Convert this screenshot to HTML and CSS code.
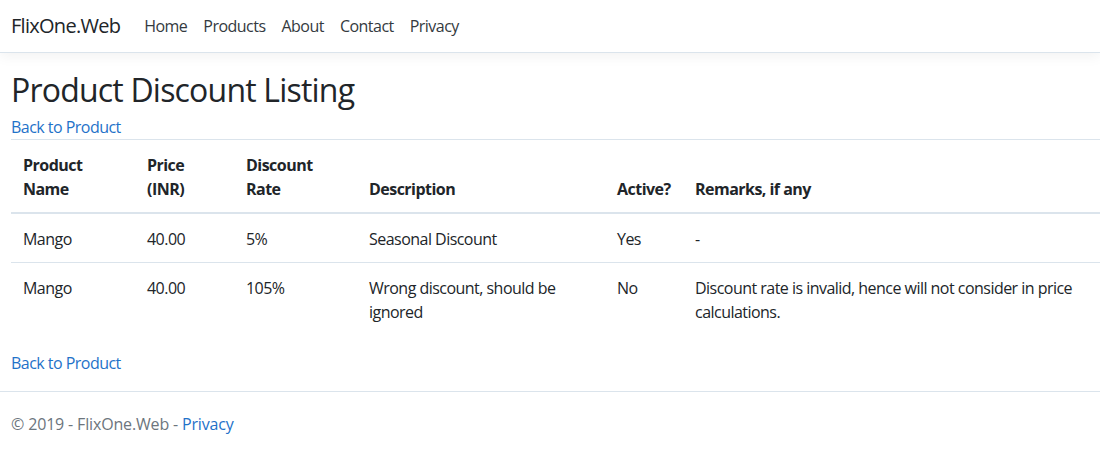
FILE: index.html
```html
<!DOCTYPE html>
<html>
<head>
<meta charset="utf-8">
<title>Product Discount Listing - FlixOne.Web</title>
<link rel="stylesheet" href="styles.css">
</head>
<body>
<header class="navbar">
  <a class="brand" href="#">FlixOne.Web</a>
  <nav class="nav">
    <a class="nav-link" href="#">Home</a>
    <a class="nav-link" href="#">Products</a>
    <a class="nav-link" href="#">About</a>
    <a class="nav-link" href="#">Contact</a>
    <a class="nav-link" href="#">Privacy</a>
  </nav>
</header>
<main class="container">
  <h1 class="title">Product Discount Listing</h1>
  <p class="para para-top"><a class="link" href="#">Back to Product</a></p>
  <table class="table">
    <colgroup>
      <col class="c1"><col class="c2"><col class="c3"><col class="c4"><col class="c5"><col class="c6">
    </colgroup>
    <thead>
      <tr>
        <th>Product Name</th>
        <th>Price (INR)</th>
        <th>Discount Rate</th>
        <th>Description</th>
        <th>Active?</th>
        <th>Remarks, if any</th>
      </tr>
    </thead>
    <tbody>
      <tr>
        <td>Mango</td>
        <td>40.00</td>
        <td>5%</td>
        <td>Seasonal Discount</td>
        <td>Yes</td>
        <td>-</td>
      </tr>
      <tr>
        <td>Mango</td>
        <td>40.00</td>
        <td>105%</td>
        <td>Wrong discount, should be ignored</td>
        <td>No</td>
        <td>Discount rate is invalid, hence will not consider in price calculations.</td>
      </tr>
    </tbody>
  </table>
  <p class="para"><a class="link" href="#">Back to Product</a></p>
</main>
<footer class="footer">
  <span>&copy; 2019 - FlixOne.Web - <a class="link" href="#">Privacy</a></span>
</footer>
</body>
</html>
```
FILE: styles.css
```css
* { box-sizing: border-box; }
html, body { margin: 0; padding: 0; }
body {
  font-family: "Segoe UI", "Open Sans", "Noto Sans", sans-serif;
  font-size: 16px;
  line-height: 1.5;
  letter-spacing: -0.033em;
  color: #212529;
  background: #fff;
}
a { text-decoration: none; }
.navbar {
  display: flex;
  align-items: center;
  height: 53px;
  padding: 0 11px;
  border-bottom: 1px solid #dbe4ec;
  box-shadow: 0 4px 12px rgba(0,0,0,0.05);
  background: #fff;
}
.brand {
  font-size: 20px;
  color: #212529;
  margin-right: 16px;
  line-height: 30px;
  letter-spacing: -0.036em;
}
.nav { display: flex; }
.nav-link {
  color: #343a40;
  padding: 0 8px;
  line-height: 24px;
}
.container { padding: 18px 0 0 11px; }
.title {
  font-size: 32px;
  font-weight: 400;
  line-height: 38px;
  margin: 0 0 6px;
  letter-spacing: -0.025em;
}
.para { margin: 0 0 16px; }
.para-top { margin-bottom: 0; }
.link { color: #1f72c9; }
.table {
  width: 100%;
  border-collapse: collapse;
  table-layout: fixed;
  margin-bottom: 16px;
}
.c1 { width: 124px; }
.c2 { width: 99px; }
.c3 { width: 123px; }
.c4 { width: 248px; }
.c5 { width: 78px; }
.table th, .table td {
  padding: 13px 12px 11px;
  text-align: left;
  vertical-align: top;
  border-top: 1px solid #dbe4ec;
}
.table th { font-weight: 700; vertical-align: bottom; }
.table thead th { border-bottom: 2px solid #dbe4ec; }
.table tbody tr:first-child td { border-top: 0; }
.footer {
  border-top: 1px solid #dbe4ec;
  line-height: 60px;
  padding: 2px 0 0 11px;
  color: #6c757d;
  letter-spacing: -0.01em;
}
```
